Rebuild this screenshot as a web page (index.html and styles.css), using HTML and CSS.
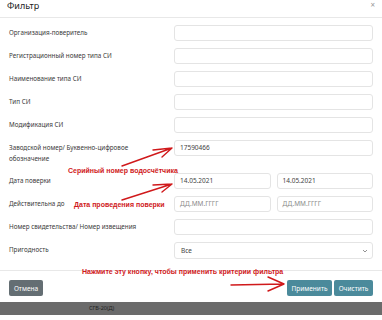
FILE: index.html
```html
<!DOCTYPE html>
<html>

<head>
    <meta charset="utf-8" />
    <title>Фильтр</title>
    <link rel="stylesheet" href="styles.css">
</head>

<body>
    <div class="modal">
        <div class="modal-header">
            <span class="modal-title">Фильтр</span>
            <span class="modal-close">&#215;</span>
        </div>
        <div class="modal-body">
            <div class="form-row">
                <label>Организация-поверитель</label>
                <div class="field"></div>
            </div>
            <div class="form-row">
                <label>Регистрационный номер типа СИ</label>
                <div class="field"></div>
            </div>
            <div class="form-row">
                <label>Наименование типа СИ</label>
                <div class="field"></div>
            </div>
            <div class="form-row">
                <label>Тип СИ</label>
                <div class="field"></div>
            </div>
            <div class="form-row">
                <label>Модификация СИ</label>
                <div class="field"></div>
            </div>
            <div class="form-row tall">
                <label>Заводской номер/ Буквенно-цифровое обозначение</label>
                <div class="field">17590466</div>
            </div>
            <div class="form-row">
                <label>Дата поверки</label>
                <div class="pair">
                    <div class="field">14.05.2021</div>
                    <div class="field">14.05.2021</div>
                </div>
            </div>
            <div class="form-row">
                <label>Действительна до</label>
                <div class="pair">
                    <div class="field placeholder">ДД.ММ.ГГГГ</div>
                    <div class="field placeholder">ДД.ММ.ГГГГ</div>
                </div>
            </div>
            <div class="form-row">
                <label>Номер свидетельства/ Номер извещения</label>
                <div class="field"></div>
            </div>
            <div class="form-row">
                <label>Пригодность</label>
                <div class="field select">
                    <span>Все</span>
                    <svg width="6" height="4" viewBox="0 0 6 4"><path d="M1 1 L3 3 L5 1" fill="none" stroke="#777" stroke-width="0.8"/></svg>
                </div>
            </div>
        </div>
        <div class="modal-footer">
            <button class="btn btn-gray">Отмена</button>
            <div class="btn-group">
                <button class="btn btn-teal">Применить</button>
                <button class="btn btn-teal">Очистить</button>
            </div>
        </div>
    </div>
    <div class="page-bar">СГВ-20(Д)</div>

    <!-- red notes drawn over the screenshot -->
    <svg class="notes" width="382" height="320" viewBox="0 0 382 320">
        <g fill="none" stroke="#d0191b" stroke-width="1.4" stroke-linecap="round">
            <path d="M122 166 L172 148 M172 148 L153 150 M172 148 L162 157" />
            <path d="M122 200 L172 184 M172 184 L153 185 M172 184 L162 192" />
            <path d="M231 285 L284 284 M284 284 L268 277 M284 284 L268 291" />
        </g>
    </svg>
    <div class="note note-serial">Серийный номер водосчётчика</div>
    <div class="note note-date">Дата проведения поверки</div>
    <div class="note note-apply">Нажмите эту кнопку, чтобы применить критерии фильтра</div>
</body>

</html>
```

FILE: styles.css
```css
body {
    margin: 0;
    width: 382px;
    height: 320px;
    position: relative;
    overflow: hidden;
    background: #fff;
    font-family: "Noto Sans", "Open Sans", sans-serif;
    color: #3a3a3a;
}

.modal {
    background: #fff;
}

.modal-header {
    height: 17px;
    display: flex;
    justify-content: space-between;
    padding: 0 7px;
    border-bottom: 1px solid #e8e8e8;
}

.modal-title {
    font-size: 9px;
    line-height: 12px;
    color: #222;
}

.modal-close {
    font-size: 8px;
    line-height: 10px;
    color: #999;
}

.modal-body {
    padding: 7px 9px 11px 9px;
    display: flex;
    flex-direction: column;
    gap: 7px;
}

.form-row {
    display: grid;
    grid-template-columns: 165px 1fr;
    align-items: start;
}

.form-row label {
    font-size: 6.3px;
    line-height: 11px;
    margin-top: 2px;
    padding-right: 25px;
}

.form-row.tall {
    min-height: 26px;
}

.field {
    box-sizing: border-box;
    height: 16px;
    border: 1px solid #e4e4e4;
    border-radius: 3px;
    padding: 0 5px;
    font-size: 6.5px;
    line-height: 14px;
    color: #444;
}

.field.placeholder {
    color: #8a8a8a;
}

.field.select {
    height: 17px;
    display: flex;
    justify-content: space-between;
    align-items: center;
    padding: 0 4px 0 6px;
}

.pair {
    display: grid;
    grid-template-columns: 1fr 1fr;
    gap: 6px;
}

.modal-footer {
    border-top: 1px solid #e8e8e8;
    padding: 9px 9px 5px 9px;
    display: flex;
    justify-content: space-between;
}

.btn-group {
    display: flex;
    gap: 2px;
}

.btn {
    height: 16px;
    border: none;
    border-radius: 2px;
    padding: 0 2px;
    font-family: "Noto Sans", "Open Sans", sans-serif;
    font-size: 6.5px;
    color: #fff;
}

.btn-gray {
    width: 34px;
    background: #646e73;
}

.btn-teal {
    background: #4b8a9b;
}

.btn-teal:first-child {
    width: 45px;
}

.btn-teal:last-child {
    width: 39px;
}

.page-bar {
    height: 13px;
    margin-top: 1px;
    background: #6b6b6b;
    font-size: 5.5px;
    line-height: 13px;
    padding-left: 89px;
    color: #222;
}

.notes {
    position: absolute;
    left: 0;
    top: 0;
}

.note {
    position: absolute;
    font-family: "Liberation Sans", Arial, sans-serif;
    font-weight: bold;
    font-size: 7px;
    line-height: 9px;
    color: #d0191b;
    white-space: nowrap;
}

.note-serial {
    left: 68px;
    top: 166px;
}

.note-date {
    left: 74px;
    top: 200px;
}

.note-apply {
    left: 82px;
    top: 267px;
}
```
